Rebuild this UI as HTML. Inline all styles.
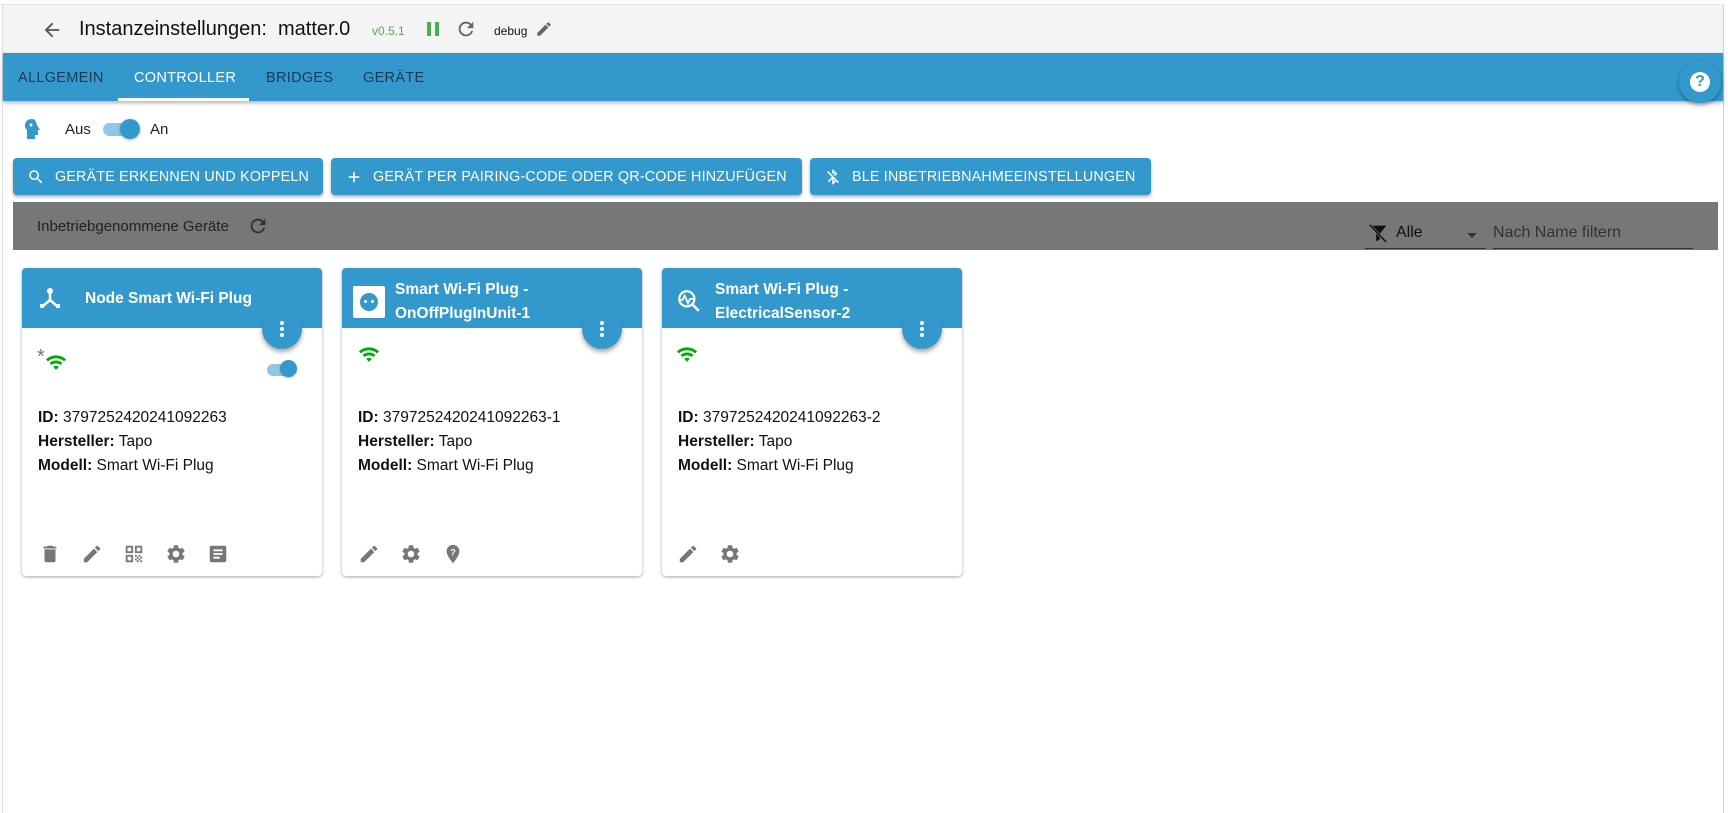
<!DOCTYPE html>
<html><head><meta charset="utf-8"><style>
*{box-sizing:border-box;margin:0;padding:0}
body{width:1728px;height:813px;background:#fff;font-family:"Liberation Sans",Arial,sans-serif;position:relative;overflow:hidden}
.page{position:absolute;left:2px;top:4px;width:1722px;height:809px;border-left:1px solid #ddd;border-right:1px solid #ccc;border-top:1px solid #e6e6e6;background:#fff}
.top{position:absolute;left:0;top:0;width:1720px;height:48px;background:#f4f4f4}
.abs{position:absolute}
.tabs{position:absolute;left:0;top:48px;width:1720px;height:48px;background:#3399cc;box-shadow:0 2px 4px rgba(0,0,0,.3)}
.tab{position:absolute;top:17px;font-size:14.5px;color:#1a3a52;letter-spacing:.3px}
.btn{position:absolute;top:153px;height:37px;background:#3399cc;color:#fff;border-radius:4px;font-size:14.3px;box-shadow:0 2px 3px rgba(0,0,0,.3);display:flex;align-items:center;padding-left:14px;letter-spacing:.2px}
.btn svg{margin-right:10px}
.card{position:absolute;top:263px;width:300px;height:308px;background:#fff;border-radius:4px;box-shadow:0 1px 3px rgba(0,0,0,.35)}
.ch{height:60px;background:#3399cc;border-radius:4px 4px 0 0;color:#fff;font-weight:bold;font-size:15px;position:relative}
.fab{position:absolute;right:20px;top:41px;width:40px;height:40px;border-radius:50%;background:#3399cc;box-shadow:0 3px 5px rgba(0,0,0,.35)}
.fab i{position:absolute;left:18px;width:4px;height:4px;border-radius:50%;background:#fff}
.info{position:absolute;left:16px;top:138px;font-size:15.5px;line-height:24px;color:#111}
.ic{position:absolute;top:275px}
</style></head><body>
<div class="page">
<div class="top">
 <svg class="abs" style="left:38px;top:14px" width="22" height="22" viewBox="0 0 24 24"><path d="M20 11H7.830l5.59-5.59L12 4l-8 8 8 8 1.41-1.41L7.83 13H20z" fill="#555"/></svg>
 <div class="abs" style="left:76px;top:13px;font-size:20px;color:#111">Instanzeinstellungen:&nbsp; matter.0</div>
 <div class="abs" style="left:369px;top:19px;font-size:12px;color:#4caf50">v0.5.1</div>
 <div class="abs" style="left:424px;top:17px;width:4px;height:14px;background:#4caf50"></div>
 <div class="abs" style="left:432px;top:17px;width:4px;height:14px;background:#4caf50"></div>
 <svg class="abs" style="left:452px;top:13px" width="22" height="22" viewBox="0 0 24 24"><path d="M17.65 6.35A7.96 7.96 0 0 0 12 4a8 8 0 1 0 7.73 10h-2.08A6 6 0 1 1 12 6c1.66 0 3.14.69 4.22 1.78L13 11h7V4z" fill="#666"/></svg>
 <div class="abs" style="left:491px;top:19px;font-size:12px;color:#111">debug</div>
 <svg class="abs" style="left:532px;top:15px" width="18" height="18" viewBox="0 0 24 24"><path d="M3 17.25V21h3.75L17.81 9.94l-3.75-3.75zM20.71 7.04a1 1 0 0 0 0-1.41l-2.34-2.34a1 1 0 0 0-1.41 0l-1.83 1.83 3.75 3.75z" fill="#666"/></svg>
</div>
<div class="tabs">
 <div class="tab" style="left:15px">ALLGEMEIN</div>
 <div class="tab" style="left:131px;color:#fff">CONTROLLER</div>
 <div class="abs" style="left:115px;top:45px;width:131px;height:3px;background:#fff"></div>
 <div class="tab" style="left:263px">BRIDGES</div>
 <div class="tab" style="left:360px">GERÄTE</div>
 <div class="abs" style="left:1676px;top:8px;width:42px;height:42px;border-radius:50%;background:#3399cc;box-shadow:0 2px 5px rgba(0,0,0,.35)"></div>
 <div class="abs" style="left:1687px;top:19px;width:20px;height:20px;border-radius:50%;background:#fff;color:#3399cc;font-weight:bold;font-size:16px;text-align:center;line-height:20px">?</div>
</div>
<svg class="abs" style="left:20px;top:113px" width="20" height="22" viewBox="0 0 20 22"><path d="M9 1C4 1 2 4 2 8c0 2 1 3 2 4v9h8v-4h3v-5h2L14 7C13 3 12 1 9 1z" fill="#3399cc"/><circle cx="8" cy="7" r="1.5" fill="#fff"/></svg>
<div class="abs" style="left:62px;top:116px;font-size:15px;color:#222">Aus</div>
<div class="abs" style="left:100px;top:118px;width:34px;height:13px;border-radius:7px;background:#8ec8e6"></div>
<div class="abs" style="left:117px;top:114px;width:20px;height:20px;border-radius:50%;background:#3399cc;box-shadow:0 1px 3px rgba(0,0,0,.3)"></div>
<div class="abs" style="left:147px;top:116px;font-size:15px;color:#222">An</div>

<div class="btn" style="left:10px;width:310px"><svg width="18" height="18" viewBox="0 0 24 24"><path d="M15.5 14h-.79l-.28-.27A6.470 6.47 0 0 0 16 9.5 6.5 6.5 0 1 0 9.5 16c1.61 0 3.09-.59 4.230-1.57l.27.28v.79l5 4.99L20.49 19zm-6 0C7.01 14 5 11.99 5 9.5S7.01 5 9.5 5 14 7.01 14 9.5 11.99 14 9.5 14" fill="#fff"/></svg>GERÄTE ERKENNEN UND KOPPELN</div>
<div class="btn" style="left:328px;width:471px"><svg width="18" height="18" viewBox="0 0 24 24"><path d="M19 13h-6v6h-2v-6H5v-2h6V5h2v6h6z" fill="#fff"/></svg>GERÄT PER PAIRING-CODE ODER QR-CODE HINZUFÜGEN</div>
<div class="btn" style="left:807px;width:341px"><svg width="18" height="18" viewBox="0 0 24 24"><path d="M13 5.83l1.88 1.88-1.6 1.6 1.41 1.41 3.02-3.02L12 2h-1v5.03l2 2zM5.41 4 4 5.41 10.59 12 5 17.59 6.41 19 11 14.41V22h1l4.29-4.29 2.3 2.29L20 18.59zM13 18.17v-3.76l1.88 1.88z" fill="#fff"/></svg>BLE INBETRIEBNAHMEEINSTELLUNGEN</div>

<div class="abs" style="left:10px;top:197px;width:1705px;height:48px;background:#777"></div>
<div class="abs" style="left:34px;top:213px;font-size:15px;color:#222">Inbetriebgenommene Geräte</div>
<svg class="abs" style="left:244px;top:210px" width="22" height="22" viewBox="0 0 24 24"><path d="M17.65 6.35A7.96 7.96 0 0 0 12 4a8 8 0 1 0 7.73 10h-2.08A6 6 0 1 1 12 6c1.66 0 3.14.69 4.22 1.78L13 11h7V4z" fill="#333"/></svg>
<svg class="abs" style="left:1364px;top:217px" width="22" height="22" viewBox="0 0 24 24"><path d="M3 4h18l-7 9v6l-4 2v-8z" fill="#111"/><path d="M3 3l18 19" stroke="#777" stroke-width="3"/><path d="M3 3l18 19" stroke="#111" stroke-width="1.6"/></svg>
<div class="abs" style="left:1393px;top:219px;font-size:16px;color:#111">Alle</div>
<div class="abs" style="left:1464px;top:228px;border-left:5px solid transparent;border-right:5px solid transparent;border-top:5px solid #333"></div>
<div class="abs" style="left:1362px;top:243px;width:121px;height:1px;background:#333"></div>
<div class="abs" style="left:1490px;top:219px;font-size:16px;color:#333">Nach Name filtern</div>
<div class="abs" style="left:1490px;top:243px;width:200px;height:1px;background:#333"></div>

<!-- card 1 -->
<div class="card" style="left:19px">
 <div class="ch"><svg class="abs" style="left:16px;top:18px" width="24" height="24" viewBox="0 0 24 24"><circle cx="12" cy="5" r="3" fill="#fff"/><path d="M12 7v7L5 20M12 14l7 6" stroke="#fff" stroke-width="2.5" fill="none"/><rect x="2" y="18" width="4" height="4" fill="#fff"/><rect x="18" y="18" width="4" height="4" fill="#fff"/></svg>
 <div class="abs" style="left:63px;top:22px;font-size:15.5px">Node Smart Wi-Fi Plug</div>
 <div class="fab"><i style="top:12px"></i><i style="top:18px"></i><i style="top:24px"></i></div></div>
 <div class="abs" style="left:15px;top:78px;font-size:20px;color:#777">*</div>
 <svg class="abs" style="left:23px;top:85px" width="22" height="20" viewBox="0 0 24 20"><path d="M1 6a16 16 0 0 1 22 0l-2.2 2.2a13 13 0 0 0-17.6 0zM5 10a10.5 10.5 0 0 1 14 0l-2.2 2.2a7.5 7.5 0 0 0-9.6 0zM9 14.2a4.5 4.5 0 0 1 6 0L12 17.5z" fill="#0a0"/></svg>
 <div class="abs" style="left:245px;top:96px;width:28px;height:12px;border-radius:6px;background:#8ec8e6"></div>
 <div class="abs" style="left:258px;top:92px;width:17px;height:17px;border-radius:50%;background:#3399cc;box-shadow:0 1px 2px rgba(0,0,0,.3)"></div>
 <div class="info"><b>ID:</b> 3797252420241092263<br><b>Hersteller:</b> Tapo<br><b>Modell:</b> Smart Wi-Fi Plug</div>
 <svg class="ic" style="left:17px" width="22" height="22" viewBox="0 0 24 24"><path d="M6 19a2 2 0 0 0 2 2h8a2 2 0 0 0 2-2V7H6zM19 4h-3.5l-1-1h-5l-1 1H5v2h14z" fill="#777"/></svg>
 <svg class="ic" style="left:59px" width="22" height="22" viewBox="0 0 24 24"><path d="M3 17.25V21h3.75L17.81 9.94l-3.75-3.75zM20.71 7.04a1 1 0 0 0 0-1.41l-2.34-2.34a1 1 0 0 0-1.41 0l-1.83 1.83 3.75 3.75z" fill="#777"/></svg>
 <svg class="ic" style="left:101px" width="22" height="22" viewBox="0 0 24 24"><path d="M3 11h8V3H3zm2-6h4v4H5zM3 21h8v-8H3zm2-6h4v4H5zM13 3v8h8V3zm6 6h-4V5h4zM13 13h2v2h-2zM15 15h2v2h-2zM13 17h2v2h-2zM17 17h2v2h-2zM19 19h2v2h-2zM15 19h2v2h-2zM17 13h2v2h-2zM19 15h2v2h-2z" fill="#777"/></svg>
 <svg class="ic" style="left:143px" width="22" height="22" viewBox="0 0 24 24"><path d="M19.14 12.94a7 7 0 0 0 0-1.88l2.03-1.58a.5.5 0 0 0 .12-.61l-1.92-3.32a.5.5 0 0 0-.59-.22l-2.39.96a7 7 0 0 0-1.62-.94l-.36-2.54a.5.5 0 0 0-.48-.41h-3.84a.5.5 0 0 0-.47.41l-.36 2.54a7 7 0 0 0-1.62.94l-2.39-.96a.5.5 0 0 0-.59.22L2.74 8.87a.5.5 0 0 0 .12.61l2.03 1.58a7 7 0 0 0 0 1.880l-2.03 1.58a.5.5 0 0 0-.12.61l1.92 3.32c.12.22.37.29.59.22l2.39-.96c.5.38 1.03.7 1.62.94l.36 2.54c.05.24.24.41.48.41h3.84c.24 0 .44-.17.47-.41l.36-2.54a7 7 0 0 0 1.62-.94l2.39.96c.22.08.47 0 .59-.22l1.92-3.32a.5.5 0 0 0-.12-.61zM12 15.6a3.6 3.6 0 1 1 0-7.2 3.6 3.6 0 0 1 0 7.2" fill="#777"/></svg>
 <svg class="ic" style="left:185px" width="22" height="22" viewBox="0 0 24 24"><path d="M19 3H5a2 2 0 0 0-2 2v14a2 2 0 0 0 2 2h14a2 2 0 0 0 2-2V5a2 2 0 0 0-2-2m-5 14H7v-2h7zm3-4H7v-2h10zm0-4H7V7h10z" fill="#777"/></svg>
</div>

<!-- card 2 -->
<div class="card" style="left:339px">
 <div class="ch"><div class="abs" style="left:11px;top:18px;width:32px;height:32px;background:#fff;border-radius:2px"></div>
 <div class="abs" style="left:18px;top:25px;width:18px;height:18px;border-radius:50%;background:#3399cc"></div>
 <div class="abs" style="left:22px;top:32px;width:3px;height:3px;border-radius:50%;background:#fff"></div><div class="abs" style="left:29px;top:32px;width:3px;height:3px;border-radius:50%;background:#fff"></div>
 <div class="abs" style="left:53px;top:10px;font-size:15.5px;line-height:24px">Smart Wi-Fi Plug -<br>OnOffPlugInUnit-1</div>
 <div class="fab"><i style="top:12px"></i><i style="top:18px"></i><i style="top:24px"></i></div></div>
 <svg class="abs" style="left:16px;top:77px" width="22" height="20" viewBox="0 0 24 20"><path d="M1 6a16 16 0 0 1 22 0l-2.2 2.2a13 13 0 0 0-17.6 0zM5 10a10.5 10.5 0 0 1 14 0l-2.2 2.2a7.5 7.5 0 0 0-9.6 0zM9 14.2a4.5 4.5 0 0 1 6 0L12 17.5z" fill="#0a0"/></svg>
 <div class="info"><b>ID:</b> 3797252420241092263-1<br><b>Hersteller:</b> Tapo<br><b>Modell:</b> Smart Wi-Fi Plug</div>
 <svg class="ic" style="left:16px" width="22" height="22" viewBox="0 0 24 24"><path d="M3 17.25V21h3.75L17.81 9.94l-3.75-3.75zM20.71 7.04a1 1 0 0 0 0-1.41l-2.34-2.34a1 1 0 0 0-1.41 0l-1.83 1.83 3.75 3.75z" fill="#777"/></svg>
 <svg class="ic" style="left:58px" width="22" height="22" viewBox="0 0 24 24"><path d="M19.14 12.94a7 7 0 0 0 0-1.88l2.03-1.58a.5.5 0 0 0 .12-.61l-1.92-3.32a.5.5 0 0 0-.59-.22l-2.39.96a7 7 0 0 0-1.62-.94l-.36-2.54a.5.5 0 0 0-.48-.41h-3.84a.5.5 0 0 0-.47.41l-.36 2.54a7 7 0 0 0-1.62.94l-2.39-.96a.5.5 0 0 0-.59.22L2.74 8.87a.5.5 0 0 0 .12.61l2.03 1.58a7 7 0 0 0 0 1.88l-2.03 1.58a.5.5 0 0 0-.12.61l1.92 3.32c.12.22.37.29.59.22l2.39-.96c.5.38 1.03.7 1.62.94l.36 2.54c.05.24.24.41.48.41h3.84c.24 0 .44-.17.47-.41l.36-2.54a7 7 0 0 0 1.62-.94l2.39.96c.22.08.47 0 .59-.22l1.92-3.32a.5.5 0 0 0-.12-.61zM12 15.6a3.6 3.6 0 1 1 0-7.2 3.6 3.6 0 0 1 0 7.2" fill="#777"/></svg>
 <svg class="ic" style="left:100px" width="22" height="22" viewBox="0 0 24 24"><path d="M12 2a7 7 0 0 0-7 7c0 5.25 7 13 7 13s7-7.75 7-13a7 7 0 0 0-7-7" fill="#777"/><text x="12" y="13.5" font-size="10" font-weight="bold" fill="#fff" text-anchor="middle" font-family="Liberation Sans">?</text></svg>
</div>

<!-- card 3 -->
<div class="card" style="left:659px">
 <div class="ch"><svg class="abs" style="left:14px;top:20px" width="26" height="26" viewBox="0 0 24 24"><circle cx="10" cy="10" r="7" stroke="#fff" stroke-width="2" fill="none"/><path d="M15 15l6 6" stroke="#fff" stroke-width="2.4"/><path d="M2 11h4l2-4 3 7 2-4h4" stroke="#fff" stroke-width="1.6" fill="none"/></svg>
 <div class="abs" style="left:53px;top:10px;font-size:15.5px;line-height:24px">Smart Wi-Fi Plug -<br>ElectricalSensor-2</div>
 <div class="fab"><i style="top:12px"></i><i style="top:18px"></i><i style="top:24px"></i></div></div>
 <svg class="abs" style="left:14px;top:77px" width="22" height="20" viewBox="0 0 24 20"><path d="M1 6a16 16 0 0 1 22 0l-2.2 2.2a13 13 0 0 0-17.6 0zM5 10a10.5 10.5 0 0 1 14 0l-2.2 2.2a7.5 7.5 0 0 0-9.6 0zM9 14.2a4.5 4.5 0 0 1 6 0L12 17.5z" fill="#0a0"/></svg>
 <div class="info"><b>ID:</b> 3797252420241092263-2<br><b>Hersteller:</b> Tapo<br><b>Modell:</b> Smart Wi-Fi Plug</div>
 <svg class="ic" style="left:15px" width="22" height="22" viewBox="0 0 24 24"><path d="M3 17.25V21h3.75L17.81 9.94l-3.75-3.75zM20.71 7.04a1 1 0 0 0 0-1.41l-2.34-2.34a1 1 0 0 0-1.41 0l-1.83 1.83 3.75 3.75z" fill="#777"/></svg>
 <svg class="ic" style="left:57px" width="22" height="22" viewBox="0 0 24 24"><path d="M19.14 12.94a7 7 0 0 0 0-1.88l2.03-1.58a.5.5 0 0 0 .12-.61l-1.92-3.32a.5.5 0 0 0-.59-.22l-2.39.96a7 7 0 0 0-1.62-.94l-.36-2.54a.5.5 0 0 0-.48-.41h-3.84a.5.5 0 0 0-.47.41l-.36 2.54a7 7 0 0 0-1.62.94l-2.39-.96a.5.5 0 0 0-.59.22L2.74 8.87a.5.5 0 0 0 .12.61l2.03 1.58a7 7 0 0 0 0 1.88l-2.03 1.58a.5.5 0 0 0-.12.61l1.92 3.32c.12.22.37.29.59.22l2.39-.96c.5.38 1.03.7 1.62.94l.36 2.54c.05.24.24.41.48.41h3.84c.24 0 .44-.17.47-.41l.36-2.54a7 7 0 0 0 1.62-.94l2.39.96c.22.08.47 0 .59-.22l1.92-3.32a.5.5 0 0 0-.12-.61zM12 15.6a3.6 3.6 0 1 1 0-7.2 3.6 3.6 0 0 1 0 7.2" fill="#777"/></svg>
</div>
</div>
</body></html>
